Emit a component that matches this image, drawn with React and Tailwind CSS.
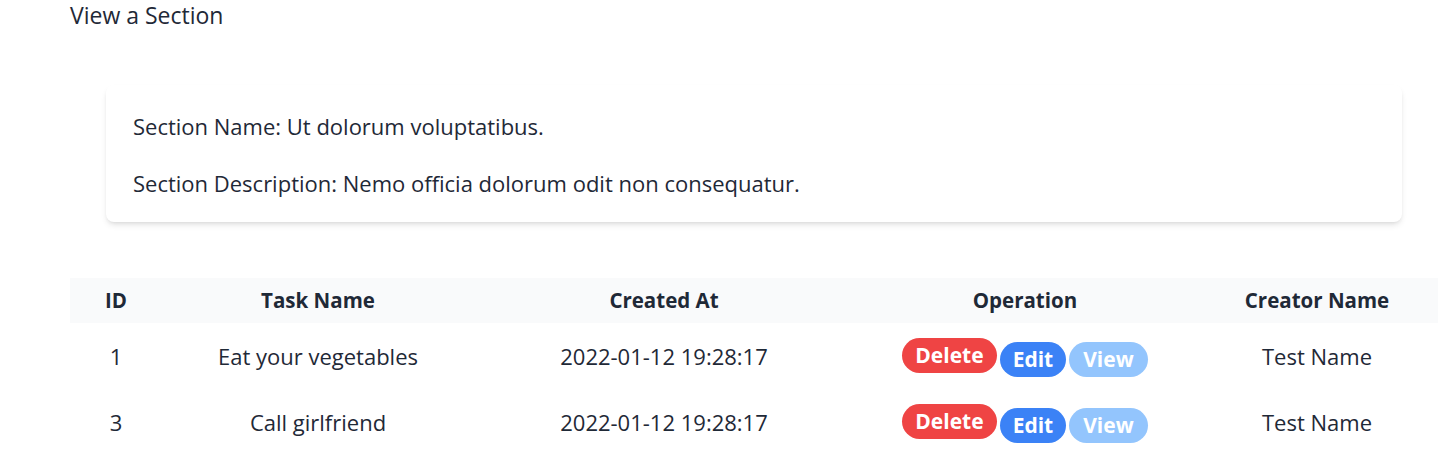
import React from "react";

const tasks = [
  { id: 1, name: "Eat your vegetables", created: "2022-01-12 19:28:17", creator: "Test Name" },
  { id: 3, name: "Call girlfriend", created: "2022-01-12 19:28:17", creator: "Test Name" },
];

const App = () => {
  return (
    <div className="min-h-screen bg-white text-[#1f2937] font-['Open_Sans','Noto_Sans',sans-serif] pl-[70px] pr-[18px]">
      <h2 className="text-[23px] leading-[30px]">View a Section</h2>

      {/* Section details */}
      <div className="mx-9 mt-[55px] bg-white rounded-lg shadow-md pl-[27px] pr-6 pt-[26px] pb-[24px] flex flex-col gap-[27px] text-[22px] leading-[30px]">
        <p>Section Name: Ut dolorum voluptatibus.</p>
        <p>Section Description: Nemo officia dolorum odit non consequatur.</p>
      </div>

      {/* Tasks table */}
      <table className="w-full mt-[56px] text-[22px] text-center">
        <thead className="bg-[#f9fafb]">
          <tr className="h-[45px] text-[20.5px] font-bold">
            <th className="w-[92px]">ID</th>
            <th className="w-[312px]">Task Name</th>
            <th className="w-[380px]">Created At</th>
            <th className="w-[342px]">Operation</th>
            <th>Creator Name</th>
          </tr>
        </thead>
        <tbody>
          {tasks.map((t) => (
            <tr key={t.id} className="h-[66px]">
              <td>{t.id}</td>
              <td>{t.name}</td>
              <td>{t.created}</td>
              <td>
                <div className="mt-[3px] flex items-start justify-center gap-[3px] text-[21px] leading-[35px] font-bold text-white">
                  <button className="h-[35px] px-[13px] rounded-full bg-[#ef4444]">Delete</button>
                  <button className="mt-1 h-[35px] px-[13px] rounded-full bg-[#3b82f6]">Edit</button>
                  <button className="mt-1 h-[35px] px-[14px] rounded-full bg-[#93c5fd]">View</button>
                </div>
              </td>
              <td>{t.creator}</td>
            </tr>
          ))}
        </tbody>
      </table>
    </div>
  );
};

export default App;
